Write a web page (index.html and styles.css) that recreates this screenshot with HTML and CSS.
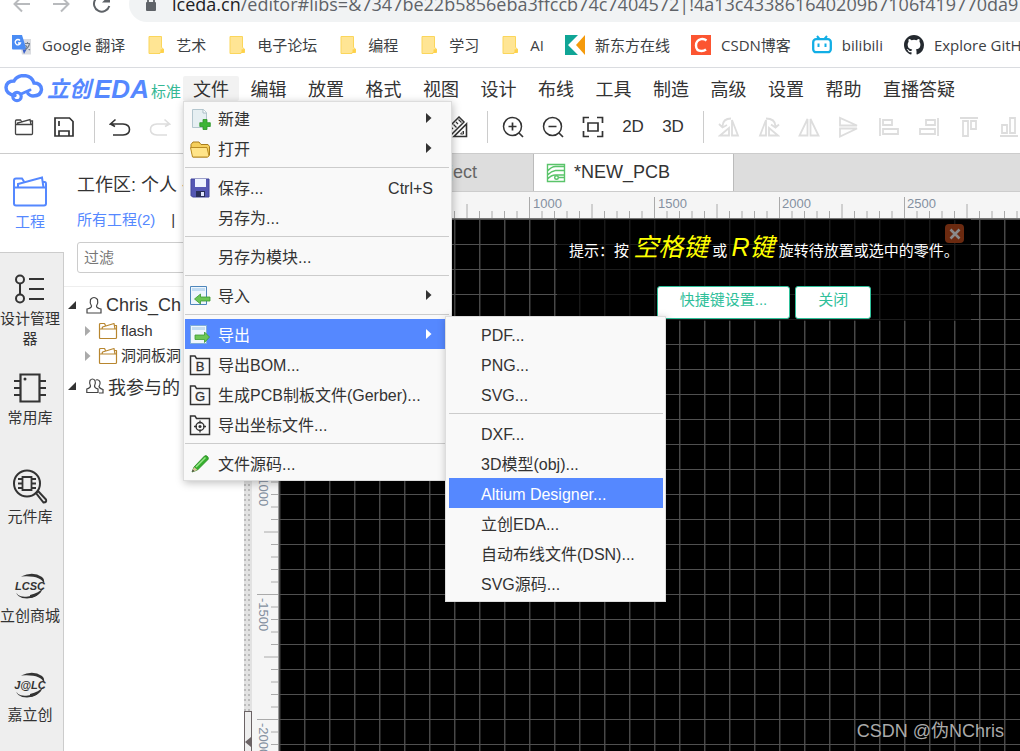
FILE: index.html
```html
<!DOCTYPE html>
<html lang="zh-CN">
<head>
<meta charset="utf-8">
<title>立创EDA</title>
<link rel="stylesheet" href="styles.css">
</head>
<body>
<svg class="defs" aria-hidden="true">
  <symbol id="folder-mark" viewBox="0 0 20 20"><path d="M3 1.500h12.500v11l2 1.500v3.500h-3.500v1H3z" fill="#ffe594" stroke="#fbd65b"/><path d="M14.500 18v-3.500l3-.5v3.500z" fill="#ffd149"/></symbol>
  <symbol id="folder-line" viewBox="0 0 20 20"><path d="M1.500 8V3.500q0-1 1-1h4l1 2M1.500 8h17v8.500q0 1-1 1h-15q-1 0-1-1zM4 8l.5-2L16 2.500 17 8M16.500 4.500h2V8" fill="none" stroke="currentColor" stroke-width="1.200" stroke-linejoin="round"/></symbol>
  <symbol id="tri" viewBox="0 0 6 10"><path d="M0 0l5.500 5L0 10z" fill="currentColor"/></symbol>
  <symbol id="box-file" viewBox="0 0 22 22"><path d="M1.500 20.500V2h4.500l1.500 2.500h13v16z" fill="none" stroke="#333" stroke-width="1.500"/></symbol>
  <symbol id="swoosh" viewBox="0 0 34 26"><path d="M8 3.500Q20-2 29 4q3 2 2 7Q28 2 8 3.500zM3 17q0 8 12 6.500 10-1.500 15-7.500-5 9-16 9.500Q3 25.500 3 17z" fill="#333"/><path d="M17 22q9-2 13-7-4 9-13 10z" fill="#333"/></symbol>
</svg>

<div class="address-bar">
  <div class="nav-buttons">
    <button aria-label="后退"><svg width="20" height="20" viewBox="0 0 20 20"><path d="M18 10H3M10 2.500L2.500 10l7.500 7.500" fill="none" stroke="#b8babd" stroke-width="2"/></svg></button>
    <button aria-label="前进"><svg width="20" height="20" viewBox="0 0 20 20"><path d="M1 10h15M9 2.500l7.500 7.500L9 17.500" fill="none" stroke="#b8babd" stroke-width="2"/></svg></button>
    <button aria-label="刷新"><svg width="20" height="20" viewBox="0 0 20 20"><path d="M17.300 12A7.800 7.800 0 1 1 15 4" fill="none" stroke="#5f6368" stroke-width="2"/><path d="M18 .5v8h-8z" fill="#5f6368"/></svg></button>
  </div>
  <div class="url-pill">
    <svg width="12" height="16" viewBox="0 0 12 16"><path d="M3 7V4.500a3 3 0 0 1 6 0V7" fill="none" stroke="#5f6368" stroke-width="1.800"/><rect x="1" y="6" width="10" height="9" rx="1" fill="#5f6368"/></svg>
    <span class="url"><b>lceda.cn</b>/editor#libs=&amp;7347be22b5856eba3ffccb74c7404572|!4a13c433861640209b7106f419770da9</span>
  </div>
</div>

<nav class="bookmarks">
  <a href="#"><svg width="20" height="20" viewBox="0 0 20 20"><path d="M7 4h12v15.500H10z" fill="#dadce0"/><path d="M0 0h10l4.500 14.500H1q-1 0-1-1z" fill="#4a8cf4"/><path d="M10.500 14.500h4L12 19z" fill="#3a5fc8"/><path d="M13 8.500h5M15.500 7v1.500M17.500 9q-1 4-4.500 5.500M13.500 10q1.500 3.500 4.500 5" fill="none" stroke="#74808c" stroke-width="1.100"/><path d="M8 5.500A2.700 2.700 0 1 0 8.500 8H6" fill="none" stroke="#fff" stroke-width="1.300"/></svg>Google 翻译</a>
  <a href="#"><svg width="20" height="20"><use href="#folder-mark"/></svg>艺术</a>
  <a href="#"><svg width="20" height="20"><use href="#folder-mark"/></svg>电子论坛</a>
  <a href="#"><svg width="20" height="20"><use href="#folder-mark"/></svg>编程</a>
  <a href="#"><svg width="20" height="20"><use href="#folder-mark"/></svg>学习</a>
  <a href="#"><svg width="20" height="20"><use href="#folder-mark"/></svg>AI</a>
  <a href="#"><svg width="20" height="20" viewBox="0 0 20 20"><path d="M0 0h13L3 10l10 10H0z" fill="#10a596"/><path d="M20 0v20l-9-10z" fill="#f59a0b"/></svg>新东方在线</a>
  <a href="#"><svg width="20" height="20" viewBox="0 0 20 20"><path d="M0 0h20v20H0z" fill="#fc5531"/><path d="M15.500 5.500Q13 3.500 10 4.200 5 5.500 5 10.500q0 5.500 5.500 5.500 2.500 0 4.500-1.500" fill="none" stroke="#fff" stroke-width="2.400"/></svg>CSDN博客</a>
  <a href="#"><svg width="20" height="20" viewBox="0 0 20 20"><path d="M5 1l2.500 3M15 1l-2.500 3" stroke="#12aee5" stroke-width="2"/><rect x="1.200" y="4.200" width="17.600" height="13" rx="3" fill="none" stroke="#12aee5" stroke-width="2.300"/><path d="M6.500 8.500V12M13.500 8.500V12" stroke="#12aee5" stroke-width="2"/></svg>bilibili</a>
  <a href="#"><svg width="20" height="20" viewBox="0 0 16 16"><path fill="#24292f" d="M8 0C3.580 0 0 3.580 0 8c0 3.540 2.290 6.530 5.470 7.590.4.070.55-.17.55-.38v-1.490c-2.010.37-2.530-.49-2.690-.94-.09-.23-.48-.94-.82-1.130-.28-.15-.68-.52-.01-.53.63-.01 1.080.58 1.230.82.72 1.210 1.870.87 2.330.66.07-.52.28-.87.51-1.070-1.780-.2-3.640-.89-3.640-3.950 0-.87.31-1.590.82-2.150-.08-.2-.36-1.020.08-2.120 0 0 .67-.21 2.200.82a7.500 7.500 0 0 1 4 0c1.530-1.040 2.200-.82 2.200-.82.44 1.100.16 1.920.08 2.120.51.56.82 1.270.82 2.150 0 3.070-1.870 3.750-3.650 3.950.29.25.54.73.54 1.480v2.200c0 .21.150.46.55.38A8 8 0 0 0 16 8c0-4.420-3.580-8-8-8z"/></svg>Explore GitHub</a>
</nav>

<header class="app-head">
  <div class="brand">
    <svg width="40" height="30" viewBox="0 0 40 30"><path d="M11 21.500Q2 20 2 13.500 2.500 7 10 7 13 1.500 20 1.500 28 2 30 9q7 0 7.500 6.500Q37 22 29 22q-3 0-5-2.500" fill="none" stroke="#5588ff" stroke-width="3.400" stroke-linecap="round"/><circle cx="13" cy="22.500" r="4.200" fill="none" stroke="#5588ff" stroke-width="3.200"/><path d="M17 20l9-4" stroke="#5588ff" stroke-width="3" stroke-linecap="round"/></svg>
    <span class="brand-cn">立创</span><span class="brand-en">EDA</span><span class="edition">标准</span>
  </div>
  <ul class="menubar">
    <li class="open"><button>文件</button>
      <ul class="menu file-menu">
        <li><svg class="ico" viewBox="0 0 22 22"><path d="M3.500 1.500h11l3 3v15h-14z" fill="#e6eff2" stroke="#b3c6ce"/><path d="M14 1.500V5h3.500" fill="#fff" stroke="#a9bcc5"/><path d="M14 11.500h4v3.200h3.300v3.800H18v3h-4v-3h-3.200v-3.800H14z" fill="#3db536" stroke="#2b9427" stroke-width=".8"/></svg><button>新建</button><svg class="arrow"><use href="#tri"/></svg></li>
        <li><svg class="ico" viewBox="0 0 22 22"><path d="M2 9V6.500L4 4h6l2 2.500h7l1.500 2V17l-2 2H4z" fill="#f5cf5c" stroke="#a97d1c"/><path d="M1.500 9.500H18L20 18l-1.500 1H3.500z" fill="#ffe489" stroke="#b98c25"/></svg><button>打开</button><svg class="arrow"><use href="#tri"/></svg></li>
        <li class="rule" role="separator"></li>
        <li><svg class="ico" viewBox="0 0 22 22"><path d="M2 2h18v18H3.500L2 18.500z" fill="#5458b4" stroke="#41459b"/><path d="M6 2h11v8H6z" fill="#eef4ff"/><path d="M7 14h9v6H7z" fill="#292f58"/><path d="M12 15h3v4h-3z" fill="#dfe5ff"/></svg><button>保存...</button><kbd>Ctrl+S</kbd></li>
        <li><span class="ico"></span><button>另存为...</button></li>
        <li class="rule" role="separator"></li>
        <li><span class="ico"></span><button>另存为模块...</button></li>
        <li class="rule" role="separator"></li>
        <li><svg class="ico" viewBox="0 0 22 22"><path d="M1.500 1.500h16v18h-16z" fill="#eef6fd" stroke="#4e86bb"/><path d="M3 3h13v3H3z" fill="#c2dcf2"/><path d="M5.500 14l6-5v3H21v4h-9.500v3z" fill="#6cc655" stroke="#3b9a31" stroke-width=".8"/></svg><button>导入</button><svg class="arrow"><use href="#tri"/></svg></li>
        <li class="rule" role="separator"></li>
        <li class="active"><svg class="ico" viewBox="0 0 22 22"><path d="M1.500 1.500h16v18h-16z" fill="#eef6fd" stroke="#7eadd8"/><path d="M3 3h13v3H3z" fill="#c2dcf2"/><path d="M20.500 13l-5-5v3H6v4.500h9.500v3z" fill="#6cc655" stroke="#3b9a31" stroke-width=".8"/></svg><button>导出</button><svg class="arrow"><use href="#tri"/></svg>
          <ul class="menu sub-menu">
            <li><button>PDF...</button></li>
            <li><button>PNG...</button></li>
            <li><button>SVG...</button></li>
            <li class="rule" role="separator"></li>
            <li><button>DXF...</button></li>
            <li><button>3D模型(obj)...</button></li>
            <li class="active"><button>Altium Designer...</button></li>
            <li><button>立创EDA...</button></li>
            <li><button>自动布线文件(DSN)...</button></li>
            <li><button>SVG源码...</button></li>
          </ul>
        </li>
        <li><svg class="ico" viewBox="0 0 22 22"><use href="#box-file"/><text x="11" y="17" class="box-letter">B</text></svg><button>导出BOM...</button></li>
        <li><svg class="ico" viewBox="0 0 22 22"><use href="#box-file"/><text x="11" y="17" class="box-letter">G</text></svg><button>生成PCB制板文件(Gerber)...</button></li>
        <li><svg class="ico" viewBox="0 0 22 22"><use href="#box-file"/><circle cx="11" cy="12.500" r="4" fill="none" stroke="#333" stroke-width="1.400"/><circle cx="11" cy="12.500" r="1.500" fill="#333"/><path d="M11 6.500v3M11 15.500v3M5 12.500h3M14 12.500h3" stroke="#333" stroke-width="1.300"/></svg><button>导出坐标文件...</button></li>
        <li class="rule" role="separator"></li>
        <li><svg class="ico" viewBox="0 0 22 22"><path d="M3 19l2-5L15.500 3q1.500-1 3 .5t.5 3L8.500 17z" fill="#35b02c" stroke="#278722" stroke-width=".8"/><path d="M7 14L16.500 4.500" stroke="#9be58d" stroke-width="1.500"/><path d="M3 19l2-5L8.500 17z" fill="#d9c29a"/><path d="M3 19l.8-2.200 1.500 1.300z" fill="#333"/></svg><button>文件源码...</button></li>
      </ul>
    </li>
    <li><button>编辑</button></li>
    <li><button>放置</button></li>
    <li><button>格式</button></li>
    <li><button>视图</button></li>
    <li><button>设计</button></li>
    <li><button>布线</button></li>
    <li><button>工具</button></li>
    <li><button>制造</button></li>
    <li><button>高级</button></li>
    <li><button>设置</button></li>
    <li><button>帮助</button></li>
    <li><button>直播答疑</button></li>
  </ul>
</header>

<div class="toolbar">
  <button aria-label="打开"><svg viewBox="0 0 22 22"><path d="M2.500 8.500V5q0-1 1-1h4l1 1.500M2.500 8.500h17v9q0 1-1 1h-15q-1 0-1-1zM4.500 8.500v-1.500L17 3.500l1 5M17.500 5h2v3.500" fill="none" stroke="#444" stroke-width="1.300"/></svg></button>
  <button aria-label="保存"><svg viewBox="0 0 22 22"><path d="M2 2h14.500L20 5.500V20H2zM6 20v-5h10v5M6 5V10" fill="none" stroke="#333" stroke-width="1.700"/></svg></button>
  <span class="tool-sep"></span>
  <button aria-label="撤销"><svg viewBox="0 0 22 22"><path d="M6.500 3.500L1.500 8H14q6.500.5 6.500 5.500T14 19H4M1.500 8L6 10.500" fill="none" stroke="#333" stroke-width="1.600"/></svg></button>
  <button aria-label="重做"><svg viewBox="0 0 22 22"><path d="M15.500 3.500l5 4.500H8q-6.500.5-6.500 5.500T8 19h10M20.500 8L16 10.500" fill="none" stroke="#ddd" stroke-width="1.600"/></svg></button>
  <span class="tool-gap"></span>
  <button aria-label="测量"><svg viewBox="0 0 22 22"><path d="M1 13L13 1l5 5L6 18z" fill="none" stroke="#333" stroke-width="1.500"/><path d="M5 11l2 2M7.500 8.500l3 3M10 6l2 2M12.500 3.500l3 3" stroke="#333" stroke-width="1.200"/><path d="M20.500 8v12.500H8z" fill="#fff" stroke="#333" stroke-width="1.600"/><path d="M17.500 15v3h-3z" fill="none" stroke="#333"/></svg></button>
  <span class="tool-sep"></span>
  <button aria-label="放大"><svg viewBox="0 0 22 22"><circle cx="10.500" cy="10.500" r="9" fill="none" stroke="#333" stroke-width="1.500"/><path d="M17 17l4 4M6.500 10.500h8M10.500 6.500v8" stroke="#333" stroke-width="1.700"/></svg></button>
  <button aria-label="缩小"><svg viewBox="0 0 22 22"><circle cx="10.500" cy="10.500" r="9" fill="none" stroke="#333" stroke-width="1.500"/><path d="M17 17l4 4M6.500 10.500h8" stroke="#333" stroke-width="1.700"/></svg></button>
  <button aria-label="适合窗口"><svg viewBox="0 0 22 22"><path d="M1.500 7V1.500H7M15 1.500h5.500V7M20.500 15v5.500H15M7 20.500H1.500V15M6 7h10v8H6z" fill="none" stroke="#333" stroke-width="1.700"/></svg></button>
  <button>2D</button>
  <button>3D</button>
  <span class="tool-sep"></span>
  <button class="off" aria-label="左旋转"><svg viewBox="0 0 22 22"><path d="M14 4v15.500h6zM11 12v7.500H2zM13 2.500Q5 2.500 4.500 10M1 8l3.500 3.500L9 9"/></svg></button>
  <button class="off" aria-label="右旋转"><svg viewBox="0 0 22 22"><path d="M8 4v15.500H2zM11 12v7.500h9zM8 2.500q9 0 9.500 7.500M13 8.500l4.500 3L21 8.500"/></svg></button>
  <button class="off" aria-label="水平翻转"><svg viewBox="0 0 22 22"><path d="M9.500 3v16.500H1.500zM12.500 3v16.500h8z"/></svg></button>
  <button class="off" aria-label="垂直翻转"><svg viewBox="0 0 22 22"><path d="M2 2v7.500h17zM2 20.500v-8h17z"/></svg></button>
  <button class="off" aria-label="左对齐"><svg viewBox="0 0 22 22"><path d="M2 2v18M5 4h9v5H5zM5 13h15v5H5z"/></svg></button>
  <button class="off" aria-label="右对齐"><svg viewBox="0 0 22 22"><path d="M20 2v18M8 4h9v5H8zM2 13h15v5H2z"/></svg></button>
  <button class="off" aria-label="顶对齐"><svg viewBox="0 0 22 22"><path d="M2 2h18M5 5h5v15H5zM13 5h5v8h-5z"/></svg></button>
  <button class="off" aria-label="底对齐"><svg viewBox="0 0 22 22"><path d="M2 20h18M4 9h5v8H4zM12 2h5v15h-5z"/></svg></button>
</div>

<main class="workspace">
  <nav class="rail">
    <button class="selected"><svg width="36" height="36" viewBox="0 0 36 36"><path d="M2 14V6.500q0-2 2-2h6l2 3M2 13.500h32v16q0 2-2 2H4q-2 0-2-2zM6 13.500V10l24-6.500 1.500 10M31 8h1.500q1.500 0 1.500 2v3.500" fill="none" stroke="currentColor" stroke-width="2"/></svg>工程</button>
    <button><svg width="36" height="36" viewBox="0 0 36 36"><g fill="none" stroke="#333" stroke-width="2"><circle cx="8" cy="8.500" r="4"/><circle cx="8" cy="27.500" r="4"/><path d="M8 12.500v11M17 8h15M17 18h15M17 28h15"/></g></svg>设计管理器</button>
    <button><svg width="36" height="36" viewBox="0 0 36 36"><path d="M8.500 4.500h19v27h-19zM2 11h6M2 18h6M2 25h6M28 11h6M28 18h6M28 25h6" fill="none" stroke="#333" stroke-width="2.200"/><circle cx="13" cy="9" r="1.500" fill="#333"/></svg>常用库</button>
    <button><svg width="36" height="36" viewBox="0 0 36 36"><g fill="none" stroke="#333" stroke-width="2"><circle cx="15" cy="14.500" r="13"/><path d="M10.500 8h9v13h-9zM6 10h4M6 14.500h4M6 19h4M20 10h4M20 14.500h4M20 19h4" stroke-width="1.800"/><path d="M24 24l2-2 8 8.500q1 3-2.500 3z"/></g></svg>元件库</button>
    <button><svg width="36" height="36" viewBox="0 0 36 36"><use href="#swoosh" x="1" y="5" width="34" height="26"/><text x="18" y="22" class="mark">LCSC</text></svg>立创商城</button>
    <button><svg width="36" height="36" viewBox="0 0 36 36"><use href="#swoosh" x="1" y="5" width="34" height="26"/><text x="18" y="22" class="mark">J@LC</text></svg>嘉立创</button>
  </nav>

  <section class="project">
    <div class="project-head">
      <h1>工作区: 个人 -</h1>
      <p><a href="#">所有工程(2)</a><span>|</span></p>
      <input type="text" placeholder="过滤" aria-label="过滤">
    </div>
    <ul class="tree">
      <li class="group"><svg class="caret" viewBox="0 0 8 8"><path d="M8 0v8H0z" fill="#333"/></svg><svg width="16" height="18" viewBox="0 0 16 18"><path d="M5.500 10Q3.500 7 4.500 3.500 8-.5 11.500 3.500 12.500 7 10.500 10q0 2 4.500 3v4H1v-4q4.500-1 4.500-3z" fill="none" stroke="#444" stroke-width="1.200"/></svg>Chris_Ch</li>
      <li class="leaf"><svg class="twist" viewBox="0 0 6 10"><use href="#tri"/></svg><svg class="gold" width="20" height="20"><use href="#folder-line"/></svg>flash</li>
      <li class="leaf"><svg class="twist" viewBox="0 0 6 10"><use href="#tri"/></svg><svg class="gold" width="20" height="20"><use href="#folder-line"/></svg>洞洞板洞</li>
      <li class="group"><svg class="caret" viewBox="0 0 8 8"><path d="M8 0v8H0z" fill="#333"/></svg><svg width="18" height="16" viewBox="0 0 18 16"><path d="M4.500 8Q3 5 4 2.500 6.500-.5 9 2.500q1 2.500-.5 5.500 0 2 3.500 3v3.500H.8V11q3.700-1 3.700-3zM10 2q3-1 4 2 .5 2-1 4.500.5 2 4 3v3.500h-4" fill="none" stroke="#444" stroke-width="1.200"/></svg>我参与的</li>
    </ul>
  </section>

  <div class="splitter"><button aria-label="折叠面板"><svg width="6" height="10" viewBox="0 0 6 10"><path d="M6 0v10L0 5z" fill="#6b6365"/></svg></button></div>

  <section class="editor">
    <div class="tabs">
      <button class="tab first">开始</button>
      <button class="tab"><svg width="20" height="20"></svg>NEW Project</button>
      <button class="tab current"><svg width="20" height="20" viewBox="0 0 20 20"><path d="M1.500 1.500h17v17h-17zM1.500 8q4-4.500 8-4.500h9M1.500 12q4-4 8-4.500h9M1.500 16q4-4.500 9-4h8M12.500 14.500h6" fill="none" stroke="#5ac46a" stroke-width="1.400"/><circle cx="10.500" cy="14.500" r="1.800" fill="#fff" stroke="#5ac46a" stroke-width="1.400"/></svg>*NEW_PCB</button>
    </div>
    <svg class="ruler-x">
      <defs><pattern id="ticks-x" x="27" width="125" height="26" patternUnits="userSpaceOnUse"><path d="M.5 5v21M63 12v14M13 19v7M25.500 19v7M38 19v7M50.500 19v7M75.500 19v7M88 19v7M100.500 19v7M113 19v7" stroke="#aaa"/></pattern></defs>
      <rect width="100%" height="26" fill="url(#ticks-x)"/>
      <text x="281" y="16">1000</text><text x="406" y="16">1500</text><text x="530" y="16">2000</text><text x="655" y="16">2500</text>
    </svg>
    <div class="board-row">
      <svg class="ruler-y">
        <defs><pattern id="ticks-y" width="26" height="125" patternUnits="userSpaceOnUse"><path d="M5 .5h21M12 63h14M19 13h7M19 25.500h7M19 38h7M19 50.500h7M19 75.500h7M19 88h7M19 100.500h7M19 113h7" stroke="#aaa"/></pattern></defs>
        <rect width="26" height="100%" fill="url(#ticks-y)"/>
        <text transform="translate(7 254) rotate(90)">-1000</text><text transform="translate(7 379) rotate(90)">-1500</text><text transform="translate(7 504) rotate(90)">-2000</text>
      </svg>
      <div class="board">
        <div class="hint">
          <button class="hint-close" aria-label="关闭提示"><svg width="12" height="12" viewBox="0 0 12 12"><path d="M1.500 1.500l9 9M10.500 1.500l-9 9" stroke="#8a8a8a" stroke-width="2.600"/></svg></button>
          <p>提示：按 <em>空格键</em> 或 <em>R键</em> 旋转待放置或选中的零件。</p>
          <div class="hint-actions"><button>快捷键设置...</button><button>关闭</button></div>
        </div>
        <span class="watermark">CSDN @伪NChris</span>
      </div>
    </div>
  </section>
</main>
</body>
</html>
```
FILE: styles.css
```css
* { box-sizing: border-box; }
body {
  margin: 0;
  height: 100vh;
  display: flex;
  flex-direction: column;
  overflow: hidden;
  background: #fff;
  color: #333;
  font-family: "Liberation Sans", "Noto Sans CJK SC", sans-serif;
  font-size: 16px;
}
ul { list-style: none; margin: 0; padding: 0; }
button { border: 0; padding: 0; margin: 0; background: none; color: inherit; font: inherit; }
a { color: inherit; text-decoration: none; }
svg { flex: none; display: block; }
.defs { position: absolute; width: 0; height: 0; }

/* Browser chrome */
.address-bar { flex: none; display: flex; height: 26px; padding-bottom: 4px; overflow: hidden; align-items: flex-end; }
.nav-buttons { flex: none; display: flex; gap: 20px; width: 129px; padding-left: 12px; align-items: flex-end; height: 28px; padding-bottom: 8px; }
.url-pill {
  flex: 1;
  display: flex;
  align-items: center;
  gap: 15px;
  height: 36px;
  padding-left: 16px;
  border-radius: 18px 0 0 18px;
  background: #f1f3f4;
  overflow: hidden;
}
.url { font: 18px/36px "Open Sans", sans-serif; color: #5f6368; white-space: nowrap; }
.url b { font-weight: 400; color: #202124; }
.bookmarks {
  flex: none;
  display: flex;
  gap: 21px;
  align-items: center;
  height: 42px;
  padding-left: 12px;
  padding-bottom: 3px;
  border-bottom: 1px solid #dadce0;
  overflow: hidden;
  font: 15px/20px "Open Sans", "Noto Sans CJK SC", sans-serif;
  color: #3c4043;
}
.bookmarks a { display: flex; gap: 10px; align-items: center; white-space: nowrap; }

/* Application header */
.app-head { flex: none; display: flex; height: 33px; padding-top: 8px; }
.brand { flex: none; display: flex; align-items: center; width: 183px; padding-left: 4px; color: #5588ff; height: 25px; }
.brand-cn { font: italic 700 22px/24px "Noto Sans CJK SC", sans-serif; margin-left: 3px; padding-bottom: 4px; }
.brand-en { font: italic 700 26px/24px "Liberation Sans", sans-serif; margin-left: 3px; }
.edition { font-size: 15px; line-height: 18px; color: #35b894; margin-left: auto; margin-right: 2px; align-self: flex-end; white-space: nowrap; }
.menubar { display: flex; justify-content: space-between; width: 782px; height: 25px; }
.menubar > li { position: relative; flex: none; }
.menubar > li > button { display: block; height: 25px; padding: 3px 10px 0; font-size: 18px; line-height: 22px; white-space: nowrap; border-radius: 2px; }
.menubar > .open > button { background: #f2f2f2; }

/* Drop-down menus */
.menu {
  position: absolute;
  z-index: 10;
  padding: 1px 2px 2px 1px;
  background: #f9f9f9;
  border: 1px solid #ddd;
  box-shadow: 1px 2px 8px rgba(0, 0, 0, .25);
}
.file-menu { left: 0; top: 25px; width: 269px; }
.sub-menu { left: 260px; top: -3px; width: 221px; padding: 2px 2px 3px 3px; }
.menu > li { position: relative; display: flex; align-items: center; height: 30px; color: #333; }
.menu > li.rule { height: 9px; }
.menu > li.rule::before { content: ""; flex: 1; height: 1px; background: #ccc; }
.menu > li.active { background: #5588ff; color: #fff; }
.menu > li > button { flex: 1; height: 30px; padding: 4px 0 0; line-height: 26px; text-align: left; white-space: nowrap; }
.sub-menu > li > button { padding-left: 32px; }
.ico { flex: none; width: 22px; height: 22px; margin: 2px 7px 0 4px; }
.arrow { width: 6px; height: 10px; margin-right: 17px; }
.menu kbd { margin-right: 16px; padding-top: 4px; font: inherit; }
.box-letter { font: 13px "Liberation Sans", sans-serif; fill: #333; stroke: #333; stroke-width: .3px; text-anchor: middle; }

/* Toolbar */
.toolbar { flex: none; display: flex; align-items: center; height: 52px; padding-left: 4px; overflow: hidden; }
.toolbar button { flex: none; width: 40px; height: 40px; display: flex; align-items: center; justify-content: center; font-size: 17px; }
.toolbar svg { width: 22px; height: 22px; }
.toolbar .off path { fill: none; stroke: #ddd; stroke-width: 1.800px; }
.tool-sep { flex: none; width: 1px; height: 32px; margin: 0 5px 0 10px; background: #ccc; }
.tool-gap { flex: none; width: 257px; }

/* Workspace */
.workspace { flex: 1; min-height: 0; display: flex; border-top: 1px solid #ccc; }
.rail { flex: none; width: 64px; background: #eee; border-right: 1px solid #ccc; }
.rail button {
  display: flex;
  flex-direction: column;
  align-items: center;
  gap: 2px;
  width: 63px;
  height: 99px;
  padding: 18px 5px 0 0;
  margin-left: -1px;
  font-size: 15px;
  line-height: 20px;
  text-align: center;
}
.rail button { padding-right: 1px; }
.rail .selected { width: 65px; padding-top: 20px; padding-right: 3px; background: #fff; color: #5588ff; border-bottom: 1px solid #ccc; }
.mark { font: italic 700 11px "Liberation Sans", sans-serif; fill: #333; text-anchor: middle; }

.project { flex: none; width: 180px; overflow: hidden; }
.project-head { height: 133px; padding: 18px 0 0 13px; border-bottom: 1px solid #eee; }
.project-head h1 { margin: 0; font-size: 18px; font-weight: 400; line-height: 26px; white-space: nowrap; }
.project-head p { display: flex; gap: 16px; margin: 12px 0; font-size: 15px; line-height: 20px; }
.project-head a { color: #5588ff; }
.project-head input { width: 150px; height: 31px; padding: 0 6px; border: 1px solid #ccc; border-radius: 3px; font: inherit; font-size: 15px; }
.project-head input::placeholder { color: #777; }
.tree { padding-top: 4px; white-space: nowrap; }
.tree li { display: flex; align-items: center; }
.group { height: 28px; padding-left: 4px; gap: 4px; font-size: 18px; }
.leaf { height: 25px; padding-left: 21px; gap: 3px; font-size: 15px; line-height: 20px; padding-bottom: 2px; }
.leaf + .group { height: 34px; }
.caret { width: 8px; height: 8px; margin-right: 6px; }
.twist { width: 6px; height: 10px; margin-right: 4px; color: #aaa; }
.gold { color: #b8862f; }

.splitter {
  flex: none;
  width: 8px;
  display: flex;
  align-items: flex-end;
  background: radial-gradient(circle at 1px 1px, #bbb 1px, #e2e2e2 1px) 0 0 / 4px 5px;
}
.splitter button { width: 8px; height: 40px; padding: 20px 0 0; border: 1px solid #6b6365; border-bottom: 0; background: #eee; }

.editor { flex: 1; min-width: 0; display: flex; flex-direction: column; }
.tabs { flex: none; display: flex; height: 38px; background: #ddd; border-bottom: 1px solid #ccc; overflow: hidden; }
.tab { flex: none; display: flex; align-items: center; gap: 8px; width: 200px; padding-left: 12px; font-size: 18px; color: #666; border-right: 1px solid #bbb; }
.tab.first { width: 82px; }
.tab.current { background: #fff; color: #333; }
.ruler-x { width: 100%; height: 27px; background: #f5f5f5; border-bottom: 1px solid #777; }
.board-row { flex: 1; min-height: 0; display: flex; }
.ruler-y { width: 27px; height: 100%; background: #f5f5f5; border-right: 1px solid #999; }
.ruler-x text, .ruler-y text { font: 13px "Liberation Sans", sans-serif; fill: #8490a0; }
.board {
  position: relative;
  flex: 1;
  background:
    linear-gradient(#505050 1px, transparent 1px) 0 0 / 25px 25px,
    linear-gradient(90deg, #484848 1px, #222 1px, #222 2px, transparent 2px) 0 0 / 25px 25px,
    #000;
}
.hint { position: absolute; top: 0; right: 49px; width: 414px; height: 102px; padding: 12px 12px 0; background: rgba(0, 0, 0, .65); color: #fff; }
.hint p { margin: 0; font-size: 15px; line-height: 32px; white-space: nowrap; }
.hint em { font-size: 25px; color: #ff0; }
.hint-close { position: absolute; top: 5px; right: 7px; width: 19px; height: 19px; display: flex; align-items: center; justify-content: center; border-radius: 4px; background: #6b2a10; }
.hint-actions { display: flex; justify-content: center; gap: 5px; margin-top: 19px; }
.hint-actions button { height: 33px; padding: 0 22px 6px; font-size: 15px; line-height: 24px; color: #2fc09a; background: #fff; border: 1px solid #2fc09a; border-radius: 3px; }
.watermark { position: absolute; right: 16px; bottom: 8px; font-size: 18px; line-height: 24px; color: #aaa; white-space: nowrap; }
```
